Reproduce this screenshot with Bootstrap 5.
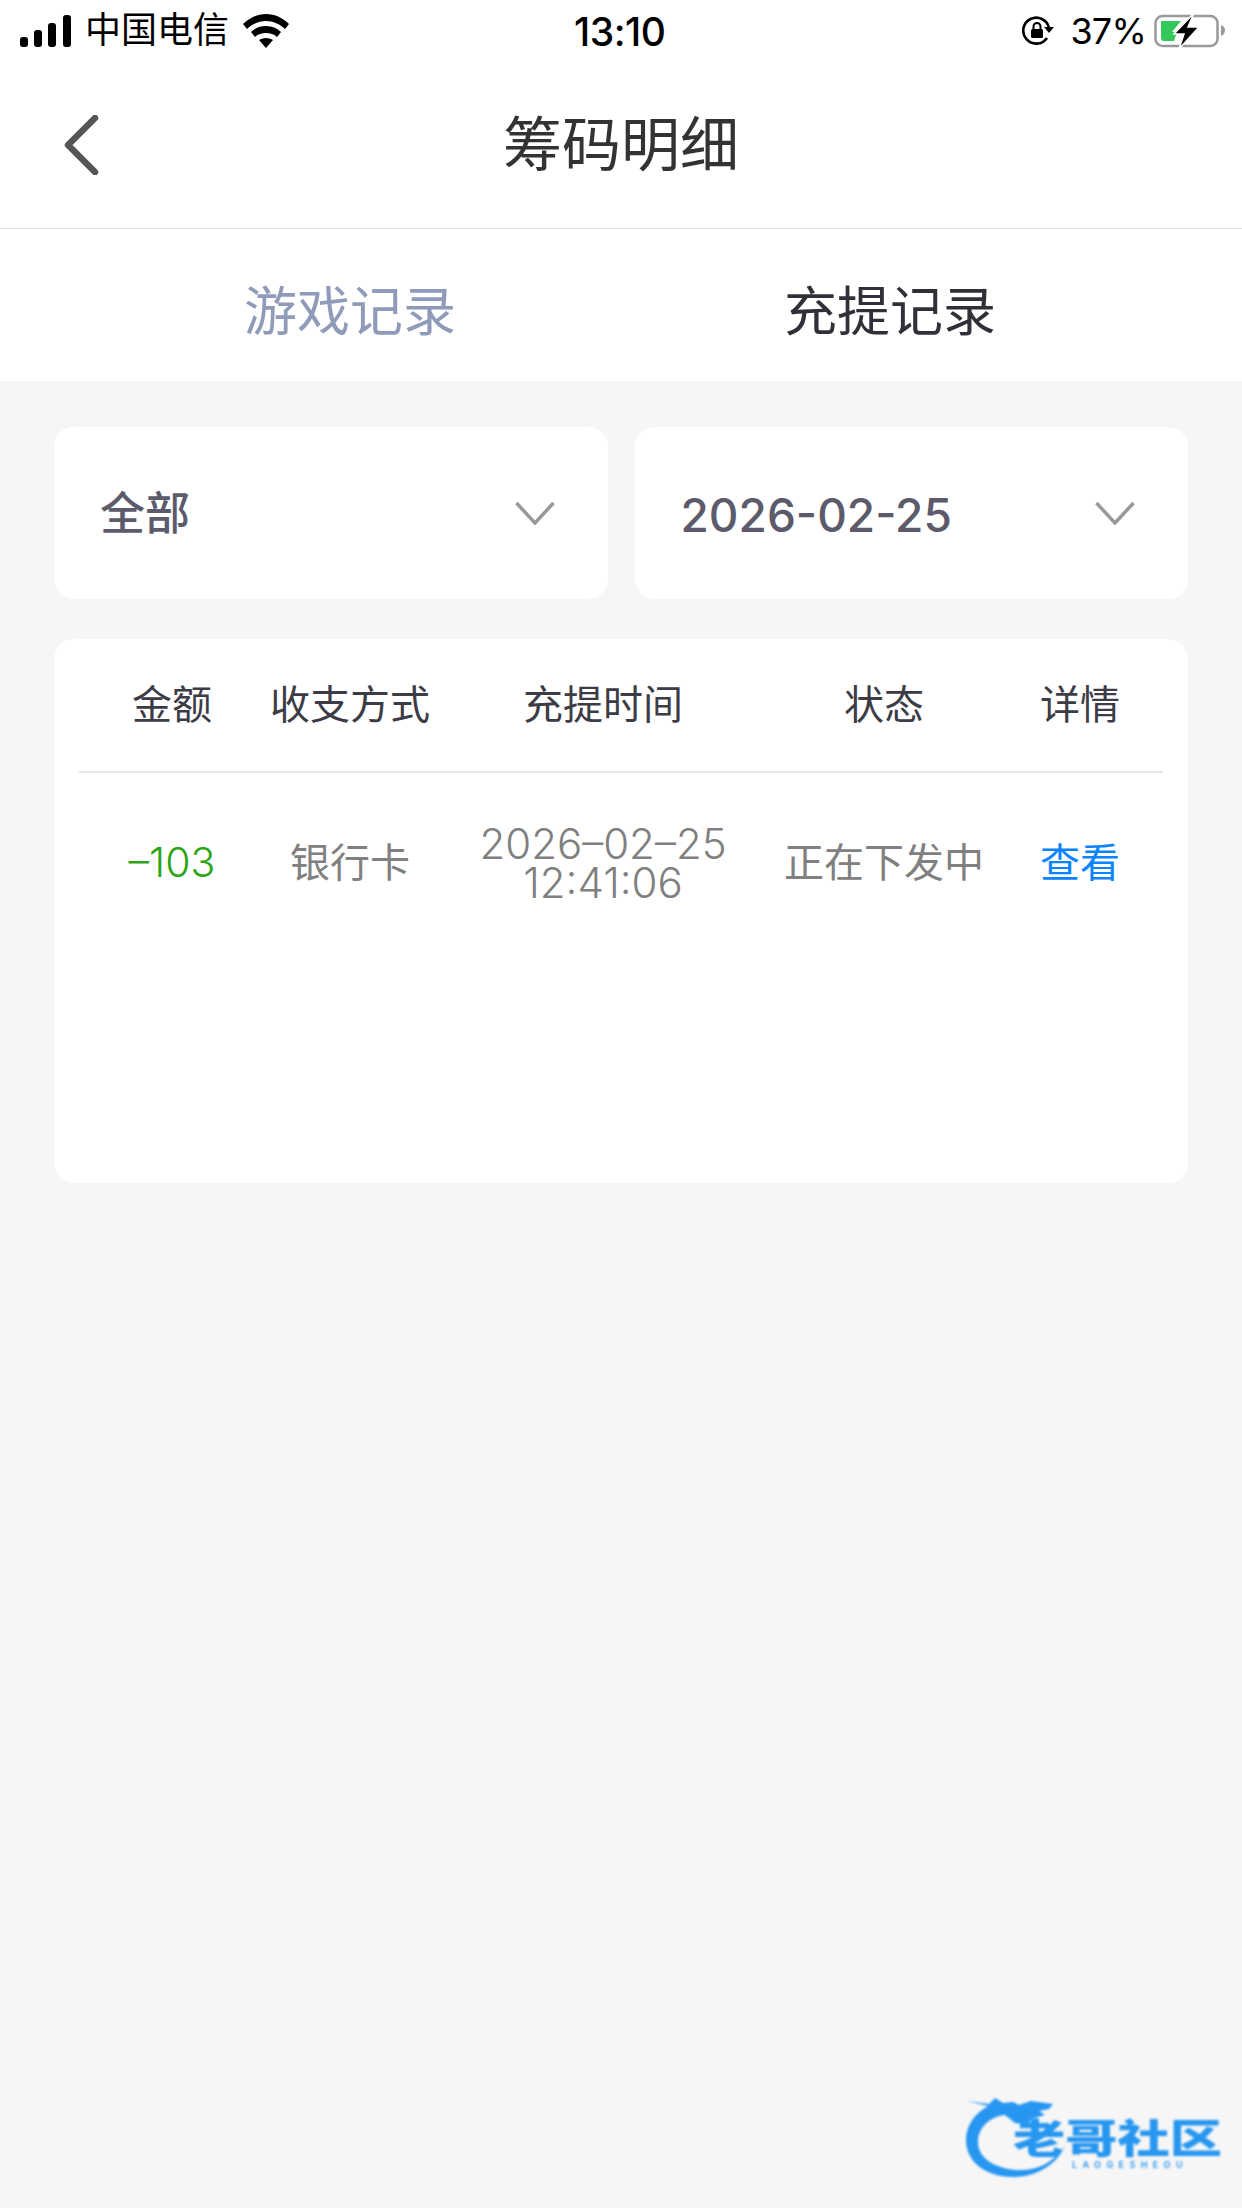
<!DOCTYPE html>
<html lang="zh-CN">
<head>
    <meta charset="UTF-8">
    <meta name="viewport" content="width=device-width, initial-scale=1.0">
    <title>筹码明细</title>
    <link rel="stylesheet" href="https://cdn.jsdelivr.net/npm/bootstrap@5.3.0/dist/css/bootstrap.min.css">
    <style>
        body {
            width: 1242px;
            min-height: 2208px;
            background: #f6f6f6;
            font-family: "Liberation Sans", "Noto Sans CJK SC", sans-serif;
            position: relative;
        }
        .status-bar {
            height: 62px;
            padding: 0 16px 0 20px;
            background: #fff;
            color: #000;
            position: relative;
        }
        .carrier { font-size: 36px; margin-left: 14px; margin-right: 14px; line-height: 1; }
        .clock {
            position: absolute;
            left: 574px;
            top: 12px;
            font: 500 39px/1 Inter, sans-serif;
            letter-spacing: -0.5px;
        }
        .percent { font: 400 36px/1 Inter, sans-serif; letter-spacing: -0.8px; margin: 0 8px 0 16px; }
        .head-bar {
            height: 167px;
            padding-left: 63px;
            background: #fff;
            border-bottom: 1px solid #e4e4e4;
            position: relative;
        }
        .page-title {
            position: absolute;
            left: 0;
            right: 0;
            margin: 0;
            padding-top: 2px;
            text-align: center;
            font-size: 59px;
            font-weight: 400;
            color: #333;
        }
        .tab-bar {
            height: 152px;
            padding: 16px 80px 0;
            background: #fff;
        }
        .tab-item { width: 540px; text-align: center; font-size: 53px; color: #8f9bb8; }
        .tab-item.on { color: #303038; }
        .filters { padding: 46px 54px 0; gap: 27px; }
        .filter-box {
            flex: 1 1 0;
            height: 172px;
            padding: 0 53px 0 46px;
            background: #fff;
            border-radius: 20px;
            color: #5c5b6b;
            font-size: 45px;
            font-weight: 500;
        }
        .filter-box > span { padding-top: 4px; }
        .filter-date { font-family: Inter, sans-serif; font-size: 46px; }
        .record-card {
            margin: 40px 54px 0;
            height: 544px;
            padding: 0 25px;
            background: #fff;
            border-radius: 20px;
        }
        .record-table { table-layout: fixed; width: 100%; margin: 0; }
        .record-table th, .record-table td {
            padding: 0;
            text-align: center;
            vertical-align: middle;
            border: 0;
            background: transparent;
        }
        .record-table th {
            height: 133px;
            border-bottom: 2px solid #e6e6ec;
            font-size: 40px;
            font-weight: 400;
            color: #3c3c46;
        }
        .record-table td { height: 180px; font-size: 40px; color: #808080; }
        .c-amount { width: 186px; }
        .c-way { width: 170px; }
        .c-time { width: 336px; }
        .c-state { width: 226px; }
        .record-table td.amount { color: #2aa515; font-family: Inter, sans-serif; font-weight: 300; font-size: 41px; }
        .record-table td.stamp { font-family: Inter, sans-serif; font-weight: 300; font-size: 42px; line-height: 39px; }
        .record-table td.view { color: #0a84ff; }
        .logo-mark { position: absolute; left: 960px; top: 2084px; }
    </style>
</head>
<body>
    <!-- status bar -->
    <div class="status-bar d-flex align-items-center">
        <svg width="51" height="32" viewBox="0 0 51 32">
            <rect x="0" y="22" width="8" height="10" rx="3"/>
            <rect x="14" y="15" width="8" height="17" rx="3"/>
            <rect x="28" y="8" width="8" height="24" rx="3"/>
            <rect x="43" y="0" width="8" height="32" rx="3"/>
        </svg>
        <span class="carrier">中国电信</span>
        <svg width="46" height="34" viewBox="0 0 46 34">
            <path d="M23 0C14 0 6 4 0 10l4 5c5-5 12-8 19-8s14 3 19 8l4-5C40 4 32 0 23 0z"/>
            <path d="M23 12c-6 0-11 2-15 6l4 5c3-3 7-4 11-4s8 1 11 4l4-5c-4-4-9-6-15-6z"/>
            <path d="M23 24c-3 0-5 1-7 2l7 8 7-8c-2-1-4-2-7-2z"/>
        </svg>
        <span class="clock">13:10</span>
        <div class="ms-auto d-flex align-items-center">
            <svg width="32" height="30" viewBox="0 0 32 30">
                <path d="M25 22A13 13 0 1 1 27 12" fill="none" stroke="#000" stroke-width="2.6"/>
                <path d="M22 11h10l-5 6z"/>
                <rect x="9" y="13" width="12" height="9" rx="1.5"/>
                <path d="M11.5 13v-2.5a3.5 3.5 0 0 1 7 0V13" fill="none" stroke="#000" stroke-width="2"/>
            </svg>
            <span class="percent">37%</span>
            <svg width="72" height="36" viewBox="0 0 72 36">
                <rect x="1.5" y="3" width="62" height="30" rx="7" fill="none" stroke="#999" stroke-width="2.5"/>
                <path d="M7 8h20l-9 11h5l-3 9H10a3 3 0 0 1-3-3z" fill="#34c759"/>
                <path d="M67 12c3 1 4 3 4 5s-1 5-4 6z" fill="#999"/>
                <path d="M40 0L20 21h10l-5 15 20-22H34l6-14z" stroke="#fff" stroke-width="1.5"/>
            </svg>
        </div>
    </div>

    <!-- title -->
    <div class="head-bar d-flex align-items-center">
        <h1 class="page-title">筹码明细</h1>
        <svg width="36" height="60" viewBox="0 0 36 60" class="position-relative">
            <path d="M32 3L5 30l27 27" fill="none" stroke="#555" stroke-width="6.5" stroke-linecap="round" stroke-linejoin="round"/>
        </svg>
    </div>

    <!-- tabs -->
    <div class="tab-bar d-flex align-items-center">
        <div class="tab-item">游戏记录</div>
        <div class="tab-item on">充提记录</div>
    </div>

    <!-- filters -->
    <div class="filters d-flex">
        <div class="filter-box d-flex align-items-center justify-content-between">
            <span>全部</span>
            <svg width="40" height="24" viewBox="0 0 40 24"><path d="M1.5 2L20 22 38.5 2" fill="none" stroke="#999" stroke-width="3.5"/></svg>
        </div>
        <div class="filter-box d-flex align-items-center justify-content-between">
            <span class="filter-date">2026-02-25</span>
            <svg width="40" height="24" viewBox="0 0 40 24"><path d="M1.5 2L20 22 38.5 2" fill="none" stroke="#999" stroke-width="3.5"/></svg>
        </div>
    </div>

    <!-- records -->
    <div class="record-card">
        <table class="table record-table">
            <thead>
                <tr>
                    <th class="c-amount">金额</th>
                    <th class="c-way">收支方式</th>
                    <th class="c-time">充提时间</th>
                    <th class="c-state">状态</th>
                    <th>详情</th>
                </tr>
            </thead>
            <tbody>
                <tr>
                    <td class="amount">–103</td>
                    <td>银行卡</td>
                    <td class="stamp">2026–02–25<br>12:41:06</td>
                    <td>正在下发中</td>
                    <td class="view">查看</td>
                </tr>
            </tbody>
        </table>
    </div>

    <!-- watermark -->
    <svg class="logo-mark" width="270" height="100" viewBox="0 0 270 100">
        <defs>
            <filter id="soft"><feGaussianBlur stdDeviation="1.1"/></filter>
        </defs>
        <g filter="url(#soft)" fill="#2596f0">
            <path d="M7 17l22 3 6-6 8 5 10-1 6 3 12-4 22 3-4 5-10 2 6 4-14 4-2 6-14-2-10-8C32 32 18 42 18 58c0 16 16 26 38 28 20 1 36-6 49-24-8 18-28 31-52 31C26 93 6 78 6 56c0-14 8-26 22-34z"/>
            <text x="53" y="70" font-family="'Noto Sans CJK SC', sans-serif" font-weight="900" font-size="50" textLength="209" lengthAdjust="spacingAndGlyphs" transform="translate(0 13) scale(1 .8)">老哥社区</text>
            <text x="112" y="84" font-family="Inter, sans-serif" font-weight="600" font-size="9" letter-spacing="5.4">LAOGESHEOU</text>
        </g>
    </svg>

    <script src="https://cdn.jsdelivr.net/npm/bootstrap@5.3.0/dist/js/bootstrap.bundle.min.js"></script>
</body>
</html>
